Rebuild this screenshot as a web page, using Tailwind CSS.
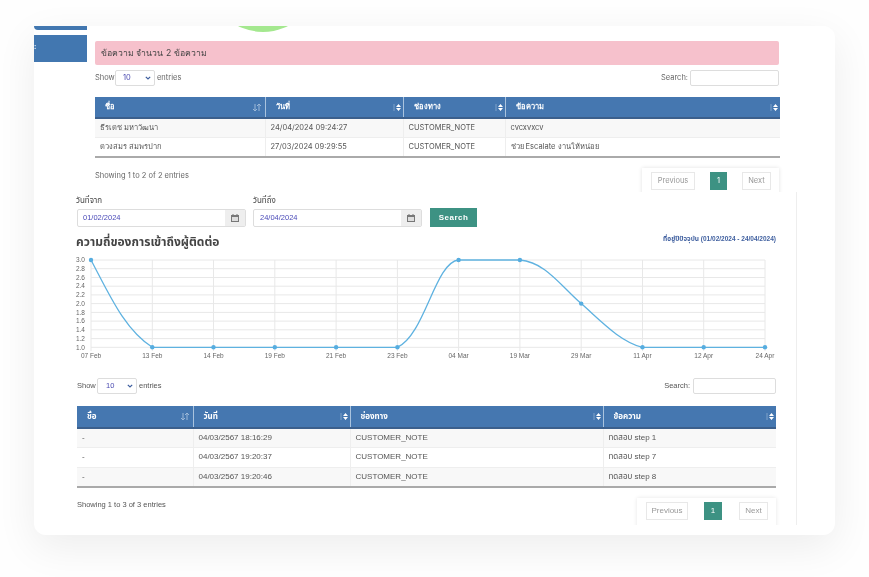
<!DOCTYPE html>
<html lang="th">
<head>
    <meta charset="UTF-8">
    <title>Contact history</title>
    <script src="https://cdn.jsdelivr.net/npm/@tailwindcss/browser@4"></script>
</head>
<body class="bg-[#fefefe] h-[577px] overflow-hidden font-['Liberation_Sans','Noto_Sans_Thai','Noto_Sans',sans-serif]">
    <div class="pt-[26px] pl-[34px]">
        <div class="relative w-[801px] h-[509px] bg-white rounded-b-xl rounded-tr-xl overflow-hidden shadow-[0_12px_40px_rgba(0,0,0,0.07)] flex flex-col blur-[0.4px]">

            <!-- top part -->
            <section class="relative h-[166px] shrink-0 overflow-hidden flex font-['Inter','Noto_Sans',sans-serif] text-[#666]">
                <div class="absolute left-[174px] top-[-104px] w-[110px] h-[110px] rounded-full bg-[#a4e88f]"></div>
                <div class="w-[53px] shrink-0">
                    <div class="h-[4px] bg-[#4277b0] rounded-bl-md"></div>
                    <div class="mt-[5px] h-[27px] bg-[#4277b0] text-white text-[7px] font-bold leading-[24px]">:</div>
                </div>
                <div class="ml-[8px] w-[684px] pt-[15px]">
                    <div class="h-[24px] bg-[#f6c1cc] rounded-[2px] pl-[6px] text-[8.7px] leading-[24px] text-[#444]">ข้อความ จำนวน 2 ข้อความ</div>
                    <div class="mt-[5px] h-[16px] flex items-center text-[7.5px]">
                        <span class="w-[20px]">Show</span>
                        <div class="w-[40px] h-[16px] border border-[#ddd] rounded-[2px] flex items-center justify-between pl-[7px] pr-[3px] text-[#4a4ab0]">
                            <span>10</span>
                            <svg class="w-[6px] h-[4px]" viewBox="0 0 6 4"><path d="M.8.8 3 3l2.2-2.2" fill="none" stroke="#3f5f9f" stroke-width="1.2"/></svg>
                        </div>
                        <span class="ml-[2px]">entries</span>
                        <span class="ml-auto mr-[2px]">Search:</span>
                        <div class="w-[89px] h-[16px] border border-[#ddd] rounded-[2px]"></div>
                    </div>
                    <table class="mt-[11px] w-[685px] table-fixed border-collapse text-[7.5px]">
                        <colgroup>
                            <col class="w-[170px]"><col class="w-[138px]"><col class="w-[102px]"><col>
                        </colgroup>
                        <thead class="bg-[#4577b0] text-white font-bold">
                            <tr class="h-[21px] border-b-2 border-[#3b5f8c]">
                                <th class="pl-[10px] pr-[4px] text-left border-r border-[#a9c3de]"><div class="flex items-center justify-between">ชื่อ <svg class="w-[8px] h-[7px]" viewBox="0 0 8 7"><path d="M2 0v7M0 5l2 2 2-2M6 7V0M4 2l2-2 2 2" fill="none" stroke="#9db9d8"/></svg></div></th>
                                <th class="pl-[10px] pr-[2px] text-left border-r border-[#a9c3de]"><div class="flex items-center justify-between">วันที่ <svg class="w-[8px] h-[7px]" viewBox="0 0 8 7"><path d="M1 0v7" stroke="#7fa2c9"/><path d="M5.5 0 8 3H3zM5.5 7 3 4h5z" fill="#fff"/></svg></div></th>
                                <th class="pl-[10px] pr-[2px] text-left border-r border-[#a9c3de]"><div class="flex items-center justify-between">ช่องทาง <svg class="w-[8px] h-[7px]" viewBox="0 0 8 7"><path d="M1 0v7" stroke="#7fa2c9"/><path d="M5.5 0 8 3H3zM5.5 7 3 4h5z" fill="#fff"/></svg></div></th>
                                <th class="pl-[10px] pr-[2px] text-left"><div class="flex items-center justify-between">ข้อความ <svg class="w-[8px] h-[7px]" viewBox="0 0 8 7"><path d="M1 0v7" stroke="#7fa2c9"/><path d="M5.5 0 8 3H3zM5.5 7 3 4h5z" fill="#fff"/></svg></div></th>
                            </tr>
                        </thead>
                        <tbody class="text-[#555] border-b-2 border-[#aaa]">
                            <tr class="h-[19.5px] bg-[#f8f8f8] border-b border-[#eee]">
                                <td class="pl-[5px] border-r border-[#eee]">ธีรเดช มหาวัฒนา</td>
                                <td class="pl-[5px] border-r border-[#eee]">24/04/2024 09:24:27</td>
                                <td class="pl-[5px] border-r border-[#eee]">CUSTOMER_NOTE</td>
                                <td class="pl-[5px]">cvcxvxcv</td>
                            </tr>
                            <tr class="h-[19.5px]">
                                <td class="pl-[5px] border-r border-[#eee]">ดวงสมร สมพรปาก</td>
                                <td class="pl-[5px] border-r border-[#eee]">27/03/2024 09:29:55</td>
                                <td class="pl-[5px] border-r border-[#eee]">CUSTOMER_NOTE</td>
                                <td class="pl-[5px]">ช่วย Escalate งานให้หน่อย</td>
                            </tr>
                        </tbody>
                    </table>
                    <div class="mt-[10px] flex items-start text-[7.5px]">
                        <span class="mt-[2px]">Showing 1 to 2 of 2 entries</span>
                        <div class="ml-auto w-[137px] h-[30px] pt-[4px] pl-[9px] flex items-start shadow-[0_0_4px_rgba(0,0,0,0.12)] text-[#999]">
                            <span class="w-[44px] h-[18px] border border-[#e8e8e8] text-center leading-[16px]">Previous</span>
                            <span class="ml-[15px] w-[17px] h-[18px] bg-[#3d9283] text-white text-center leading-[18px]">1</span>
                            <span class="ml-[15px] w-[29px] h-[18px] border border-[#e8e8e8] text-center leading-[16px]">Next</span>
                        </div>
                    </div>
                </div>
            </section>

            <!-- bottom part -->
            <section class="relative w-[763px] h-[333px] shrink-0 overflow-hidden bg-white border-r border-[#eee] pl-[43px] pr-[20px] text-[#555]">
                <div class="pt-[5px] flex items-end text-[8px]">
                    <div class="w-[176px]">
                        <div class="h-[12px] leading-[8px] text-[#444] -ml-[1px]">วันที่จาก</div>
                        <div class="w-[169px] h-[18px] border border-[#ddd] rounded-[2px] flex items-center text-[7.5px] text-[#4a4ab8]">
                            <span class="pl-[5px]">01/02/2024</span>
                            <span class="ml-auto w-[20px] h-full bg-[#eee] flex items-center justify-center"><svg class="w-[8px] h-[8px]" viewBox="0 0 8 8"><path d="M0 1h8v7H0z" fill="#777"/><path d="M1 3h6v4H1z" fill="#ddd"/><path d="M2 0v1M6 0v1" stroke="#777"/></svg></span>
                        </div>
                    </div>
                    <div class="w-[177px]">
                        <div class="h-[12px] leading-[8px] text-[#444]">วันที่ถึง</div>
                        <div class="w-[169px] h-[18px] border border-[#ddd] rounded-[2px] flex items-center text-[7.5px] text-[#4a4ab8]">
                            <span class="pl-[6px]">24/04/2024</span>
                            <span class="ml-auto w-[20px] h-full bg-[#eee] flex items-center justify-center"><svg class="w-[8px] h-[8px]" viewBox="0 0 8 8"><path d="M0 1h8v7H0z" fill="#777"/><path d="M1 3h6v4H1z" fill="#ddd"/><path d="M2 0v1M6 0v1" stroke="#777"/></svg></span>
                        </div>
                    </div>
                    <div class="w-[47px] h-[19px] bg-[#3d9283] text-white text-[8px] font-bold tracking-[0.5px] text-center leading-[19px]">Search</div>
                </div>
                <div class="mt-[5px] flex items-start justify-between">
                    <h2 class="-ml-[1px] text-[12px] font-bold text-[#444] leading-[20px]">ความถี่ของการเข้าถึงผู้ติดต่อ</h2>
                    <span class="text-[6.5px] font-bold text-[#3f5f9f] leading-[14px]">ที่อยู่ปีปัจจุบัน (01/02/2024 - 24/04/2024)</span>
                </div>
                <svg class="-mt-[2px] -ml-[1px] w-[705px] h-[115px] overflow-visible" viewBox="76 250 705 115">
                    <path d="M91 260H765M91 268.7H765M91 277.5H765M91 286.2H765M91 294.9H765M91 303.6H765M91 312.4H765M91 321.1H765M91 329.8H765M91 338.6H765M91 347.3H765" stroke="#e8e8e8" fill="none"/>
                    <path d="M91 260V351M152.3 260V351M213.5 260V351M274.8 260V351M336.1 260V351M397.4 260V351M458.6 260V351M519.9 260V351M581.2 260V351M642.5 260V351M703.7 260V351M765 260V351" stroke="#e8e8e8" fill="none"/>
                    <path d="M91 260C110 296 125 330 152.3 347.3H397.4C425 335 435 262 458.6 260H519.9C545 262 560 285 581.2 303.6C600 320 620 342 642.5 347.3H765" stroke="#5fb2e0" stroke-width="1.3" fill="none"/>
                    <g fill="#56ade0">
                        <circle cx="91" cy="260" r="2.2"/><circle cx="152.3" cy="347.3" r="2.2"/><circle cx="213.5" cy="347.3" r="2.2"/><circle cx="274.8" cy="347.3" r="2.2"/><circle cx="336.1" cy="347.3" r="2.2"/><circle cx="397.4" cy="347.3" r="2.2"/><circle cx="458.6" cy="260" r="2.2"/><circle cx="519.9" cy="260" r="2.2"/><circle cx="581.2" cy="303.6" r="2.2"/><circle cx="642.5" cy="347.3" r="2.2"/><circle cx="703.7" cy="347.3" r="2.2"/><circle cx="765" cy="347.3" r="2.2"/>
                    </g>
                    <g font-size="6.5" fill="#666" text-anchor="end">
                        <text x="85" y="262">3.0</text><text x="85" y="271">2.8</text><text x="85" y="279.7">2.6</text><text x="85" y="288.4">2.4</text><text x="85" y="297.1">2.2</text><text x="85" y="305.8">2.0</text><text x="85" y="314.6">1.8</text><text x="85" y="323.3">1.6</text><text x="85" y="332">1.4</text><text x="85" y="340.8">1.2</text><text x="85" y="349.5">1.0</text>
                    </g>
                    <g font-size="6.5" fill="#666" text-anchor="middle">
                        <text x="91" y="358">07 Feb</text><text x="152.3" y="358">13 Feb</text><text x="213.5" y="358">14 Feb</text><text x="274.8" y="358">19 Feb</text><text x="336.1" y="358">21 Feb</text><text x="397.4" y="358">23 Feb</text><text x="458.6" y="358">04 Mar</text><text x="519.9" y="358">19 Mar</text><text x="581.2" y="358">29 Mar</text><text x="642.5" y="358">11 Apr</text><text x="703.7" y="358">12 Apr</text><text x="765" y="358">24 Apr</text>
                    </g>
                </svg>
                <div class="mt-[13px] h-[16px] flex items-center text-[7.5px]">
                    <span class="w-[20px]">Show</span>
                    <div class="w-[40px] h-[16px] border border-[#ddd] rounded-[2px] flex items-center justify-between pl-[8px] pr-[3px] text-[#4a4ab0]">
                        <span>10</span>
                        <svg class="w-[6px] h-[4px]" viewBox="0 0 6 4"><path d="M.8.8 3 3l2.2-2.2" fill="none" stroke="#3f5f9f" stroke-width="1.2"/></svg>
                    </div>
                    <span class="ml-[2px]">entries</span>
                    <span class="ml-auto mr-[3px]">Search:</span>
                    <div class="w-[83px] h-[16px] border border-[#ddd] rounded-[2px]"></div>
                </div>
                <table class="mt-[12px] w-[699px] table-fixed border-collapse text-[8px]">
                    <colgroup>
                        <col class="w-[116px]"><col class="w-[157px]"><col class="w-[253px]"><col>
                    </colgroup>
                    <thead class="bg-[#4577b0] text-white font-bold">
                        <tr class="h-[22px] border-b-2 border-[#3b5f8c]">
                            <th class="pl-[10px] pr-[4px] text-left border-r border-[#a9c3de]"><div class="flex items-center justify-between">ชื่อ <svg class="w-[8px] h-[7px]" viewBox="0 0 8 7"><path d="M2 0v7M0 5l2 2 2-2M6 7V0M4 2l2-2 2 2" fill="none" stroke="#9db9d8"/></svg></div></th>
                            <th class="pl-[10px] pr-[2px] text-left border-r border-[#a9c3de]"><div class="flex items-center justify-between">วันที่ <svg class="w-[8px] h-[7px]" viewBox="0 0 8 7"><path d="M1 0v7" stroke="#7fa2c9"/><path d="M5.5 0 8 3H3zM5.5 7 3 4h5z" fill="#fff"/></svg></div></th>
                            <th class="pl-[10px] pr-[2px] text-left border-r border-[#a9c3de]"><div class="flex items-center justify-between">ช่องทาง <svg class="w-[8px] h-[7px]" viewBox="0 0 8 7"><path d="M1 0v7" stroke="#7fa2c9"/><path d="M5.5 0 8 3H3zM5.5 7 3 4h5z" fill="#fff"/></svg></div></th>
                            <th class="pl-[10px] pr-[2px] text-left"><div class="flex items-center justify-between">ข้อความ <svg class="w-[8px] h-[7px]" viewBox="0 0 8 7"><path d="M1 0v7" stroke="#7fa2c9"/><path d="M5.5 0 8 3H3zM5.5 7 3 4h5z" fill="#fff"/></svg></div></th>
                        </tr>
                    </thead>
                    <tbody class="border-b-2 border-[#aaa]">
                        <tr class="h-[19.5px] bg-[#f8f8f8] border-b border-[#eee]">
                            <td class="pl-[5px] border-r border-[#eee]">-</td>
                            <td class="pl-[5px] border-r border-[#eee]">04/03/2567 18:16:29</td>
                            <td class="pl-[5px] border-r border-[#eee]">CUSTOMER_NOTE</td>
                            <td class="pl-[5px]">ทดสอบ step 1</td>
                        </tr>
                        <tr class="h-[19.5px] border-b border-[#eee]">
                            <td class="pl-[5px] border-r border-[#eee]">-</td>
                            <td class="pl-[5px] border-r border-[#eee]">04/03/2567 19:20:37</td>
                            <td class="pl-[5px] border-r border-[#eee]">CUSTOMER_NOTE</td>
                            <td class="pl-[5px]">ทดสอบ step 7</td>
                        </tr>
                        <tr class="h-[19.5px] bg-[#f8f8f8]">
                            <td class="pl-[5px] border-r border-[#eee]">-</td>
                            <td class="pl-[5px] border-r border-[#eee]">04/03/2567 19:20:46</td>
                            <td class="pl-[5px] border-r border-[#eee]">CUSTOMER_NOTE</td>
                            <td class="pl-[5px]">ทดสอบ step 8</td>
                        </tr>
                    </tbody>
                </table>
                <div class="mt-[10px] flex items-start text-[7.5px]">
                    <span class="mt-[1px]">Showing 1 to 3 of 3 entries</span>
                    <div class="ml-auto w-[139px] h-[32px] pt-[4px] pl-[9px] flex items-start shadow-[0_0_4px_rgba(0,0,0,0.1)] text-[8px] text-[#999]">
                        <span class="w-[42px] h-[18px] border border-[#e8e8e8] text-center leading-[16px]">Previous</span>
                        <span class="ml-[16px] w-[18px] h-[18px] bg-[#3d9283] text-white text-center leading-[18px]">1</span>
                        <span class="ml-[17px] w-[29px] h-[18px] border border-[#e8e8e8] text-center leading-[16px]">Next</span>
                    </div>
                </div>
            </section>
        </div>
    </div>
</body>
</html>
